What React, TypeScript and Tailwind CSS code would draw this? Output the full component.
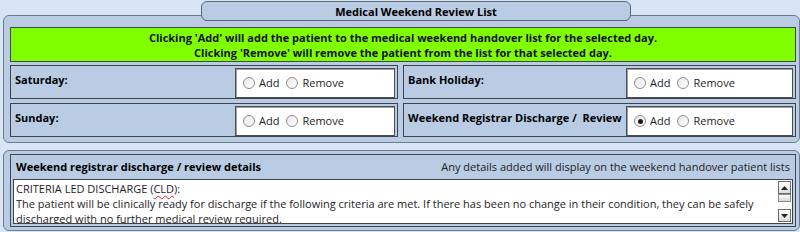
import React from "react";

function Radio({ checked }: { checked?: boolean }) {
  return (
    <span className="relative inline-flex w-[12px] h-[12px] rounded-full border border-[#8c8c8c] bg-gradient-to-br from-[#e8e8e8] to-white items-center justify-center shrink-0">
      {checked && <span className="w-[5px] h-[5px] rounded-full bg-[#1a1a1a]" />}
    </span>
  );
}

function RadioBox({ checked, width }: { checked?: boolean; width: string }) {
  return (
    <div className={`${width} h-[30px] shrink-0 bg-white border border-[#4b4f55] shadow-[inset_1px_1px_0_#a0a0a0] flex items-center pl-[7px] text-[11px] text-[#1e1e1e]`}>
      <Radio checked={checked} />
      <span className="ml-[4px]">Add</span>
      <span className="ml-[7px] inline-flex"><Radio /></span>
      <span className="ml-[4px]">Remove</span>
    </div>
  );
}

function Row({ label, checked, boxW }: { label: string; checked?: boolean; boxW: string }) {
  return (
    <div className="h-[34px] min-w-0 border border-[#3e444c] bg-[#b9cce4] flex justify-between pt-[2px] pr-[2px]">
      <div className="pl-[4px] pt-[4px] text-[11px] font-bold text-black leading-[16px] whitespace-pre">{label}</div>
      <RadioBox checked={checked} width={boxW} />
    </div>
  );
}

export default function App() {
  return (
    <div className="relative w-[800px] h-[232px] bg-[#d7e5f5] overflow-hidden font-['Open_Sans',sans-serif] text-black text-[11px]">
      <div className="absolute left-[201px] top-[1px] w-[430px] h-[20px] z-10 rounded-[6px] border border-[#5d6877] bg-[#b9cce4] flex items-center justify-center text-[11px] font-bold leading-none">
        Medical Weekend Review List
      </div>
      <div className="ml-[3px] mt-[15px] w-[797px] h-[128px] rounded-[6px] border border-[#6e7b8c] bg-[#b9cce4] pl-[6px] pr-[3px] pt-[11px]">
        <div className="h-[35px] border border-[#40484f] bg-[#80ff00] flex flex-col items-center justify-center text-[11px] font-bold leading-[15px] text-[#111]">
          <div>Clicking 'Add' will add the patient to the medical weekend handover list for the selected day.</div>
          <div>Clicking 'Remove' will remove the patient from the list for that selected day.</div>
        </div>
        <div className="grid grid-cols-[388px_minmax(0,1fr)] gap-x-[5px] gap-y-[4px] mt-[3px]">
          <Row label="Saturday:" boxW="w-[160px]" />
          <Row label="Bank Holiday:" boxW="w-[167px]" />
          <Row label="Sunday:" boxW="w-[160px]" />
          <Row label="Weekend Registrar Discharge /  Review" checked boxW="w-[167px]" />
        </div>
      </div>
      <div className="ml-[3px] mt-[7px] w-[797px] h-[81px] rounded-[6px] border border-[#6e7b8c] bg-[#b9cce4] pl-[6px] pr-[3px] pt-[3px]">
        <div className="h-[73px] border border-[#40484f] bg-[#b9cce4] flex flex-col px-[2px]">
          <div className="h-[24px] flex items-center justify-between pl-[3px] pr-[3px]">
            <span className="text-[11px] font-bold">Weekend registrar discharge / review details</span>
            <span className="text-[11px] text-[#222]">Any details added will display on the weekend handover patient lists</span>
          </div>
          <div className="relative h-[45px] bg-white border border-[#3e444c] overflow-hidden">
            <div className="pl-[2px] pr-[20px] pt-[1px] text-[11px] leading-[15px] text-[#1e1e1e]">
              <div>
                CRITERIA LED DISCHARGE (<span className="underline decoration-wavy decoration-[#e03030] decoration-1 underline-offset-2">CLD</span>):
              </div>
              <div>
                The patient will be clinically ready for discharge if the following criteria are met. If there has been no change in their condition, they can be safely discharged with no further medical review required.
              </div>
            </div>
            <div className="absolute right-[1px] top-[1px] bottom-[1px] w-[14px] flex flex-col justify-between items-center">
              <div className="w-[13px] h-[13px] border border-[#6b6b6b] bg-gradient-to-b from-white to-[#dcdcdc] flex items-center justify-center">
                <svg width="7" height="4" viewBox="0 0 7 4"><path d="M0 4 L3.5 0 L7 4 Z" fill="#222" /></svg>
              </div>
              <div className="w-[13px] h-[8px] border border-[#8a8a8a] bg-gradient-to-b from-white to-[#d8d8d8]" />
              <div className="flex-1" />
              <div className="w-[13px] h-[13px] border border-[#6b6b6b] bg-gradient-to-b from-white to-[#dcdcdc] flex items-center justify-center">
                <svg width="7" height="4" viewBox="0 0 7 4"><path d="M0 0 L3.5 4 L7 0 Z" fill="#222" /></svg>
              </div>
            </div>
          </div>
        </div>
      </div>
    </div>
  );
}
